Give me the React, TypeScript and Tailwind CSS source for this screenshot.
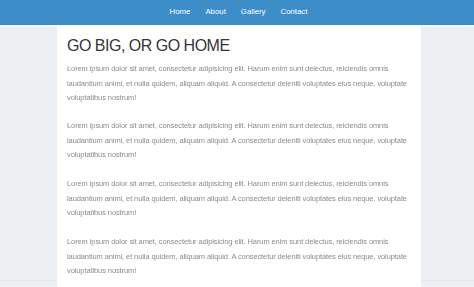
import React from "react";

const LOREM =
  "Lorem ipsum dolor sit amet, consectetur adipisicing elit. Harum enim sunt delectus, reiciendis omnis laudantium animi, et nulla quidem, aliquam aliquid. A consectetur deleniti voluptates eius neque, voluptate voluptatibus nostrum!";

export default function App() {
  const links = ["Home", "About", "Gallery", "Contact"];
  return (
    <div
      className="w-[474px] h-[287px] overflow-hidden bg-[#ecf0f1] antialiased"
      style={{ fontFamily: '"Liberation Sans", Arial, sans-serif' }}
    >
      <nav className="h-[25px] bg-[#3d8ec8] flex items-center justify-center gap-[15px] pb-[1px] pl-[3px] shadow-[0_1px_1px_rgba(0,0,0,0.15)]">
        {links.map((l) => (
          <a key={l} className="text-white text-[7.8px] leading-none">
            {l}
          </a>
        ))}
      </nav>
      <div className="flex">
        <aside className="w-[57px] h-[256px] border-t-2 border-[#f4f6f7] bg-[#edf0f2] border-b border-b-[#e3e7e9]" />
        <main className="w-[364px] bg-white px-[10px] pt-[13px] pb-[20px]">
          <h1 className="text-[16px] leading-[16px] tracking-[-0.5px] text-[#333638] font-normal mb-[7.5px]">
            GO BIG, OR GO HOME
          </h1>
          {[0, 1, 2, 3].map((i) => (
            <p
              key={i}
              className="text-[7.5px] leading-[14.5px] tracking-[-0.1px] text-[#8c8c8c] mb-[14.3px] will-change-transform bg-transparent"
            >
              {LOREM}
            </p>
          ))}
        </main>
        <aside className="flex-1 h-[256px] border-t-2 border-[#f4f6f7] bg-[#edf0f2] border-b border-b-[#e3e7e9]" />
      </div>
    </div>
  );
}
